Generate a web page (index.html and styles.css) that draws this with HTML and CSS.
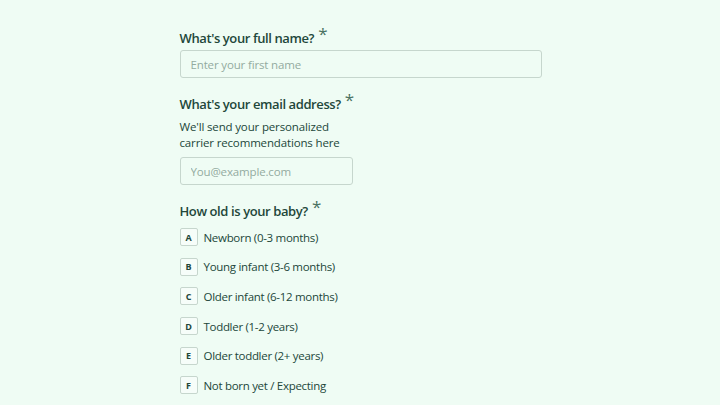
FILE: index.html
```html
<!DOCTYPE html>
<html lang="en">
<head>
    <meta charset="UTF-8">
    <meta name="viewport" content="width=device-width, initial-scale=1.0">
    <title>Baby carrier quiz</title>
    <link rel="stylesheet" href="styles.css">
</head>
<body>
    <form class="quiz">
        <div class="question">
            <label class="question-title" for="name">What's your full name?<span class="req">*</span></label>
            <input class="text-input wide" type="text" id="name" placeholder="Enter your first name">
        </div>

        <div class="question">
            <label class="question-title" for="email">What's your email address?<span class="req">*</span></label>
            <p class="hint">We'll send your personalized<br>carrier recommendations here</p>
            <input class="text-input narrow" type="email" id="email" placeholder="You@example.com">
        </div>

        <div class="question">
            <div class="question-title">How old is your baby?<span class="req">*</span></div>
            <ul class="choices">
                <li class="choice"><span class="key">A</span>Newborn (0-3 months)</li>
                <li class="choice"><span class="key">B</span>Young infant (3-6 months)</li>
                <li class="choice"><span class="key">C</span>Older infant (6-12 months)</li>
                <li class="choice"><span class="key">D</span>Toddler (1-2 years)</li>
                <li class="choice"><span class="key">E</span>Older toddler (2+ years)</li>
                <li class="choice"><span class="key">F</span>Not born yet / Expecting</li>
            </ul>
        </div>
    </form>
</body>
</html>
```

FILE: styles.css
```css
body {
    margin: 0;
    background: #effcf4;
    font-family: "Open Sans", "Noto Sans", sans-serif;
    color: #22473a;
}

.quiz {
    width: 362px;
    margin: 0 auto;
    padding: 29px 0 0 1px;
}

.question {
    margin-bottom: 17px;
}

.question-title {
    display: block;
    font-size: 13px;
    font-weight: 600;
    letter-spacing: -0.4px;
    line-height: 18px;
    margin-bottom: 3px;
}

.req {
    font-size: 17px;
    font-weight: 400;
    margin-left: 4px;
    color: #4b7262;
    vertical-align: top;
    position: relative;
    top: -4px;
}

.hint {
    margin: 6px 0 6px;
    font-size: 11.5px;
    letter-spacing: -0.15px;
    line-height: 16px;
}

.text-input {
    display: block;
    box-sizing: border-box;
    height: 28px;
    padding: 0 10px;
    border: 1px solid #c6d6cd;
    border-radius: 3px;
    background: #effcf4;
    font-family: inherit;
    font-size: 11.5px;
    letter-spacing: -0.15px;
    color: #22473a;
    outline: none;
}

.text-input::placeholder {
    color: #93aba0;
}

.wide {
    width: 362px;
}

.narrow {
    width: 173px;
}

.choices {
    list-style: none;
    margin: 8px 0 0;
    padding: 0;
}

.choice {
    display: flex;
    align-items: center;
    height: 18px;
    margin-bottom: 11.7px;
    font-size: 11.5px;
    letter-spacing: -0.3px;
}

.key {
    display: flex;
    align-items: center;
    justify-content: center;
    box-sizing: border-box;
    width: 18px;
    height: 18px;
    margin-right: 6px;
    border: 1px solid #c6d6cd;
    border-radius: 2px;
    background: #f6fdf9;
    font-size: 9px;
    font-weight: 700;
    letter-spacing: 0;
}
```
